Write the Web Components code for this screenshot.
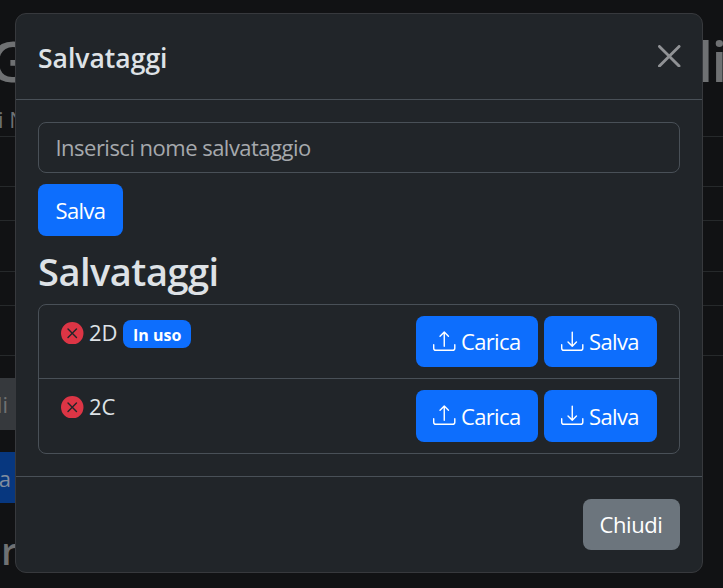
<!DOCTYPE html>
<html lang="it"><head><meta charset="utf-8"><title>Salvataggi</title>
<style>
html,body{margin:0;height:100%;overflow:hidden;background:#111214}
body{font:22px/34px "Open Sans","Noto Sans",sans-serif;color:#dee2e6}
</style></head><body>
<save-page></save-page>
<script>
const define=(name,html)=>customElements.define(name,class extends HTMLElement{
  constructor(){super();this.attachShadow({mode:'open'}).innerHTML=html;}
});
define('ui-button',`<style>
:host{display:inline-flex;box-sizing:border-box;align-items:flex-start;gap:5.5px;height:51px;padding:8px 16px 0 17.5px;border-radius:8px;background:#0d6efd;color:#fff;white-space:nowrap;line-height:34px;letter-spacing:-.65px}
:host([kind=secondary]){background:#6c757d;letter-spacing:-.4px;padding-left:16.5px}
</style><slot name="icon"></slot><slot></slot>`);
define('ui-icon',`<style>:host{display:block;width:22.5px;height:22.5px;flex:none;margin:6px 0 0 -.5px}svg{display:block;width:100%;height:100%}path{display:none}
:host([name=upload]) .u,:host([name=download]) .d,.b{display:block}</style>
<svg viewBox="0 0 16 16" fill="currentColor"><path class="b" d="M.5 9.9a.5.5 0 0 1 .5.5v2.5a1 1 0 0 0 1 1h12a1 1 0 0 0 1-1v-2.5a.5.5 0 0 1 1 0v2.5a2 2 0 0 1-2 2H2a2 2 0 0 1-2-2v-2.5a.5.5 0 0 1 .5-.5"/>
<path class="u" d="M7.646 1.146a.5.5 0 0 1 .708 0l3 3a.5.5 0 0 1-.708.708L8.5 2.707V11.5a.5.5 0 0 1-1 0V2.707L5.354 4.854a.5.5 0 1 1-.708-.708z"/>
<path class="d" d="M7.646 11.854a.5.5 0 0 0 .708 0l3-3a.5.5 0 0 0-.708-.708L8.5 10.293V1.5a.5.5 0 0 0-1 0v8.793L5.354 8.146a.5.5 0 1 0-.708.708z"/></svg>`);
define('save-item',`<style>
:host{display:flex;box-sizing:border-box;justify-content:space-between;align-items:flex-start;padding:11px 22px 0;height:73px}
.name{display:flex;align-items:flex-start;height:34px;line-height:32px;letter-spacing:-.2px}
svg{width:22.5px;height:22.5px;margin:5.5px 5.5px 0 0;display:block}
.actions{display:flex;gap:6px}
ui-button{height:var(--bh,51px);padding-top:var(--bp,8px)}
ui-icon{margin-top:var(--im,6px)}
</style><div class="name"><svg viewBox="0 0 16 16"><path fill="#dc3545" d="M16 8A8 8 0 1 1 0 8a8 8 0 0 1 16 0M5.354 4.646a.5.5 0 1 0-.708.708L7.293 8l-2.647 2.646a.5.5 0 0 0 .708.708L8 8.707l2.646 2.647a.5.5 0 0 0 .708-.708L8.707 8l2.647-2.646a.5.5 0 0 0-.708-.708L8 7.293z"/></svg><slot></slot></div>
<div class="actions"><ui-button style="width:122px"><ui-icon slot="icon" name="upload"></ui-icon>Carica</ui-button><ui-button style="width:113px"><ui-icon slot="icon" name="download"></ui-icon>Salva</ui-button></div>`);
define('use-badge',`<style>:host{display:block;box-sizing:border-box;width:68px;height:28px;margin:4px 0 0 6px;padding-left:10px;border-radius:8px;background:#0d6efd;color:#fff;font-weight:700;font-size:16px;line-height:30px;letter-spacing:0}</style><slot></slot>`);
define('save-dialog',`<style>
:host{display:flex;flex-direction:column;box-sizing:border-box;width:688px;height:560px;background:#212529;border:1px solid #37393d;border-radius:11px}
header{height:85px;border-bottom:1px solid #495057;display:flex;justify-content:space-between;align-items:flex-start;padding:0 21.5px 0 22px;flex:none}
h5{margin:27px 0 0;font-size:26.5px;line-height:34px;font-weight:650}
header svg{width:22.5px;height:22.5px;margin-top:30.5px}
main{padding:22px;height:332px;display:flex;flex-direction:column;align-items:flex-start}
.input{box-sizing:border-box;width:642px;height:51px;border:1px solid #495057;border-radius:8px;padding:7px 16.5px;line-height:34px;color:#a6a9ad;flex:none;letter-spacing:-.52px}
h2{margin:10px 0 8px;font-size:38px;font-weight:600;line-height:50px;letter-spacing:-.5px}
.list{box-sizing:border-box;width:642px;height:150px;border:1px solid #495057;border-radius:8px;flex:none}
save-item+save-item{border-top:1px solid #495057;height:75px;--bh:52px;--bp:9px;--im:5px}
.two-d{width:28px}
footer{border-top:1px solid #495057;flex:1;display:flex;justify-content:flex-end;align-items:flex-start;padding:22px}
</style><header><h5>Salvataggi</h5><svg viewBox="0 0 16 16" fill="#909295"><path d="M.293.293a1 1 0 0 1 1.414 0L8 6.586 14.293.293a1 1 0 1 1 1.414 1.414L9.414 8l6.293 6.293a1 1 0 0 1-1.414 1.414L8 9.414l-6.293 6.293a1 1 0 0 1-1.414-1.414L6.586 8 .293 1.707a1 1 0 0 1 0-1.414"/></svg></header>
<main><div class="input">Inserisci nome salvataggio</div>
<ui-button style="width:85px;height:52px;margin-top:11px;padding-top:9px">Salva</ui-button>
<h2>Salvataggi</h2>
<div class="list"><save-item><span class="two-d">2D</span><use-badge>In uso</use-badge></save-item><save-item><span>2C</span></save-item></div></main>
<footer><ui-button kind="secondary" style="width:97px">Chiudi</ui-button></footer>`);
define('dimmed-page',`<style>
:host{display:flex;justify-content:space-between;width:723px;height:588px;overflow:hidden;color:#6f7173}
.l,.r{display:flex;flex-direction:column;overflow:hidden}.l{width:16px}.r{width:21px}
.title{height:103px;box-sizing:border-box;padding-top:22px;font-size:56px;font-weight:650;line-height:76px;flex:none;white-space:nowrap}
.sub{height:33px;line-height:33px;white-space:nowrap;flex:none}
.rows{display:grid;grid-template-rows:50px 34px 51px 34px 50px 1px;flex:none}.rows i{border-top:1px solid #26292b}
.grey,.blue{white-space:nowrap;flex:none;display:flex;justify-content:flex-end;box-sizing:border-box}
.grey{height:52px;background:#36393d;margin-top:22px;line-height:52px;padding-right:8px}
.blue{height:51px;background:#07377f;margin-top:22px;line-height:52px;padding-right:5px;color:#818d9f}
.er{font-size:38px;font-weight:650;line-height:48px;margin:23px 0 0 -21px;white-space:nowrap}
</style><div class="l"><div class="title"><span style="margin-left:-11px">G</span></div><div class="sub"><span style="margin-left:-2px">i N</span></div><div class="rows"><i></i><i></i><i></i><i></i><i></i><i></i></div><div class="grey">di</div><div class="blue">a</div><div class="er">er</div></div>
<div class="r"><div class="title"><span style="margin-left:-4.5px;letter-spacing:-1.5px">li</span></div><div class="sub"></div><div class="rows"><i></i><i></i><i></i><i></i><i></i><i></i></div></div>`);
define('save-page',`<style>:host{display:block;position:relative;width:723px;height:588px;overflow:hidden}save-dialog{position:absolute;left:15px;top:13px}</style><dimmed-page></dimmed-page><save-dialog></save-dialog>`);
</script></body></html>
